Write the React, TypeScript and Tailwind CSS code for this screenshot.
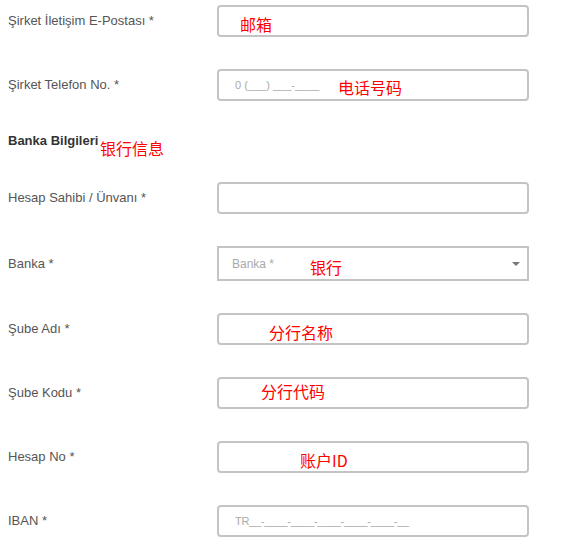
import type React from "react"

const cjk = "font-['Noto_Sans_CJK_SC','Liberation_Sans',sans-serif] text-[16px] leading-4 text-[#ff0000]"

interface RowProps {
  label: string
  children?: React.ReactNode
  select?: boolean
}

function Row({ label, children, select }: RowProps) {
  return (
    <div className="flex items-center">
      <label className="w-[217px] shrink-0 pl-2 text-[13px] text-[#555]">{label}</label>
      <div
        className={
          select
            ? "relative flex h-[35px] w-[312px] items-center border-2 border-[#c4c4c4] bg-white"
            : "relative flex h-[32px] w-[312px] items-center rounded-[4px] border-2 border-[#c4c4c4] bg-white"
        }
      >
        {children}
      </div>
    </div>
  )
}

function Note({ text, left, top }: { text: string; left: number; top: number }) {
  return (
    <span className={`absolute whitespace-nowrap ${cjk}`} style={{ left, top }}>
      {text}
    </span>
  )
}

export default function App() {
  return (
    <div className="flex w-[574px] flex-col gap-8 bg-white pt-[5px] font-['Liberation_Sans',Arial,sans-serif]">
      <Row label="Şirket İletişim E-Postası *">
        <Note text="邮箱" left={21} top={9} />
      </Row>
      <Row label="Şirket Telefon No. *">
        <span className="pl-4 text-[11px] text-[#aaa]">0 (___) ___-____</span>
        <Note text="电话号码" left={119} top={8} />
      </Row>
      <div className="relative -mt-[2px] -mb-[1px] h-[20px]">
        <h3 className="pl-2 text-[13px] font-bold leading-5 text-[#333]">Banka Bilgileri</h3>
        <span className={`absolute ${cjk}`} style={{ left: 100, top: 9 }}>
          银行信息
        </span>
      </div>
      <Row label="Hesap Sahibi / Ünvanı *" />
      <Row label="Banka *" select>
        <span className="pl-[13px] text-[12px] text-[#aaa]">Banka *</span>
        <Note text="银行" left={91} top={11} />
        <span className="absolute right-[7px] top-[14px] h-0 w-0 border-x-[4px] border-t-[4px] border-x-transparent border-t-[#777]" />
      </Row>
      <Row label="Şube Adı *">
        <Note text="分行名称" left={50} top={9} />
      </Row>
      <Row label="Şube Kodu *">
        <Note text="分行代码" left={42} top={4} />
      </Row>
      <Row label="Hesap No *">
        <Note text="账户ID" left={81} top={9} />
      </Row>
      <Row label="IBAN *">
        <span className="pl-4 text-[11px] tracking-[-0.3px] text-[#aaa]">TR__-____-____-____-____-____-__</span>
      </Row>
    </div>
  )
}
